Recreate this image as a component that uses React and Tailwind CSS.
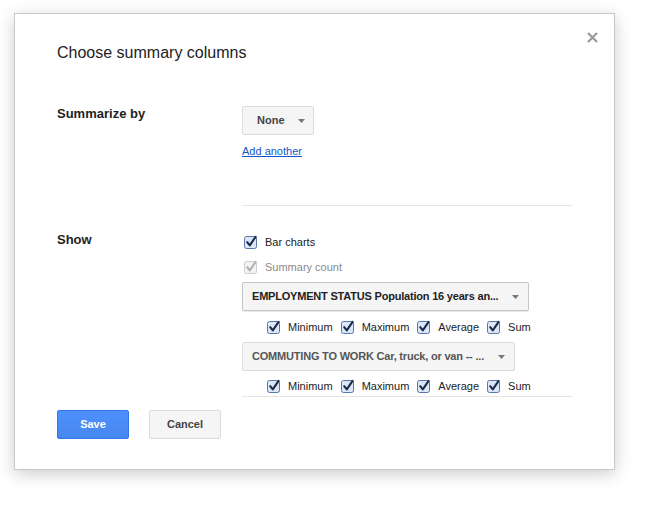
import React from "react";

// checkbox drawn like the old Chrome/Mac one
const Check = ({ disabled }) => (
  <svg width="14" height="14" viewBox="0 0 14 14" className="shrink-0">
    <rect
      x="0.5"
      y="1.5"
      width="12"
      height="12"
      rx="2"
      fill={disabled ? "#f3f3f3" : "#dbe7f7"}
      stroke={disabled ? "#cdcdcd" : "#5877a8"}
    />
    <path
      d="M3.2 7.2 L5.8 10.4 L11.6 1.8"
      fill="none"
      stroke={disabled ? "#b3b3b3" : "#1b2b4b"}
      strokeWidth="2.1"
      strokeLinecap="round"
      strokeLinejoin="round"
    />
  </svg>
);

const Arrow = () => (
  <svg width="7" height="4" viewBox="0 0 7 4" className="shrink-0">
    <path d="M0 0 H7 L3.5 4 Z" fill="#777" />
  </svg>
);

const CheckItem = ({ label, disabled }) => (
  <div className="flex items-center h-[16px]">
    <Check disabled={disabled} />
    <span
      className={`ml-[7px] text-[11px] leading-[14px] ${
        disabled ? "text-[#8a8a8a]" : "text-[#222]"
      }`}
    >
      {label}
    </span>
  </div>
);

const StatRow = ({ className }) => (
  <div className={`flex items-center gap-[8px] pl-[25px] ${className}`}>
    {["Minimum", "Maximum", "Average", "Sum"].map((s) => (
      <CheckItem key={s} label={s} />
    ))}
  </div>
);

const Select = ({ text, hover, className }) => (
  <div
    className={`flex items-center h-[29px] pl-[9px] pr-[9px] rounded-[2px] border bg-[#f5f5f5] text-[11px] font-bold ${
      hover
        ? "border-[#c6c6c6] text-[#222] shadow-[0_1px_1px_rgba(0,0,0,0.1)]"
        : "border-[#dcdcdc] text-[#555]"
    } ${className}`}
  >
    <span className="whitespace-nowrap tracking-[-0.2px]">{text}</span>
    <span className="ml-[14px] flex">
      <Arrow />
    </span>
  </div>
);

export default function App() {
  return (
    <div
      className="w-[671px] h-[506px] bg-white overflow-hidden pt-[13px] pl-[14px]"
      style={{ fontFamily: "'Liberation Sans', Arial, sans-serif" }}
    >
      <div className="relative w-[601px] h-[457px] bg-white border border-[#c8c8c8] shadow-[0_4px_16px_rgba(0,0,0,0.2)] pt-[29px] pl-[42px] pr-[41px]">
        {/* close */}
        <svg
          className="absolute top-[18px] right-[16px]"
          width="11"
          height="11"
          viewBox="0 0 11 11"
        >
          <path
            d="M1 1 L10 10 M10 1 L1 10"
            stroke="#9a9a9a"
            strokeWidth="2.2"
          />
        </svg>

        <h1 className="text-[16px] leading-[20px] text-[#222]">
          Choose summary columns
        </h1>

        {/* summarize by */}
        <div className="flex mt-[43px]">
          <div className="w-[185px] text-[13px] leading-[16px] font-bold text-[#222]">
            Summarize by
          </div>
          <div className="w-[330px] border-b border-[#e5e5e5] pb-[47px]">
            <div className="flex">
              <div className="flex items-center h-[29px] pl-[14px] pr-[8px] rounded-[2px] border border-[#dcdcdc] bg-[#f5f5f5] text-[11px] font-bold text-[#444]">
                None
                <span className="ml-[13px] flex">
                  <Arrow />
                </span>
              </div>
            </div>
            <a
              href="#"
              className="block mt-[9px] text-[11px] leading-[14px] text-[#15c] underline"
            >
              Add another
            </a>
          </div>
        </div>

        {/* show */}
        <div className="flex">
          <div className="w-[185px] pt-[26px] text-[13px] leading-[16px] font-bold text-[#222]">
            Show
          </div>
          <div className="w-[330px] border-b border-[#e5e5e5] pt-[28px] pb-[2px]">
            <div className="pl-[2px]">
              <CheckItem label="Bar charts" />
            </div>
            <div className="pl-[2px] mt-[9px]">
              <CheckItem label="Summary count" disabled />
            </div>
            <div className="flex mt-[7px]">
              <Select
                hover
                text="EMPLOYMENT STATUS Population 16 years an..."
              />
            </div>
            <StatRow className="mt-[8px]" />
            <div className="flex mt-[7px]">
              <Select text="COMMUTING TO WORK Car, truck, or van -- ..." />
            </div>
            <StatRow className="mt-[7px]" />
          </div>
        </div>

        {/* actions */}
        <div className="flex gap-[20px] mt-[13px]">
          <button className="w-[72px] h-[29px] rounded-[2px] border border-[#3079ed] bg-gradient-to-b from-[#4d90fe] to-[#4787ed] text-white text-[11px] font-bold">
            Save
          </button>
          <button className="w-[72px] h-[29px] rounded-[2px] border border-[#dcdcdc] bg-[#f5f5f5] text-[#444] text-[11px] font-bold">
            Cancel
          </button>
        </div>
      </div>
    </div>
  );
}
